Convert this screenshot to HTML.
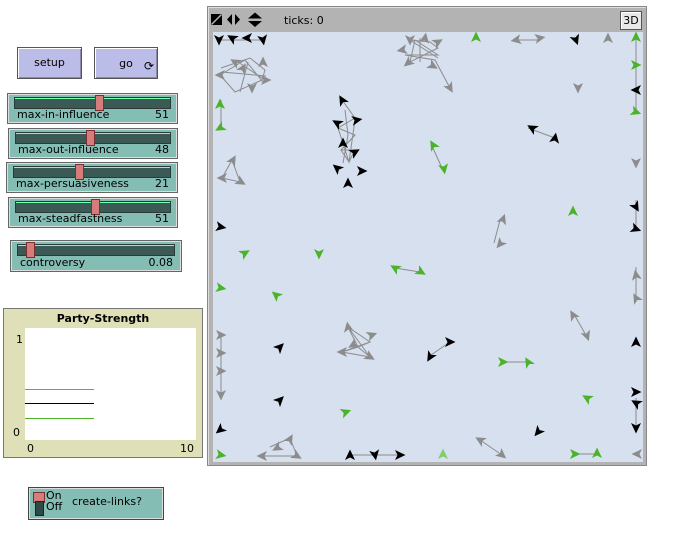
<!DOCTYPE html>
<html><head><meta charset="utf-8"><style>
body{margin:0;width:676px;height:545px;background:#fff;position:relative;overflow:hidden;font-family:"DejaVu Sans","Liberation Sans",sans-serif;font-size:11px;color:#000}
.a{position:absolute;box-sizing:border-box}
.btn{background:#bcbce8;border:1px solid #555;box-shadow:inset 1px 1px 0 #fff,inset -1px -1px 0 #8888b0;text-align:center}
.sl{background:#83bdb4;border:1px solid #666;box-shadow:0 0 0 1px #ddd inset}
.tr{position:absolute;left:6px;right:6px;top:3px;height:10px;background:#3c5a55;border:1px solid #2a3a38;box-shadow:inset 0 1px 0 #7fa}
.th{position:absolute;top:1px;width:9px;height:16px;background:#d67c7c;border:1px solid #7a3030;box-sizing:border-box}
.lb{position:absolute;left:9px;bottom:2px}
.vl{position:absolute;right:8px;bottom:2px}
</style></head><body>
<div class="a btn" style="left:17px;top:47px;width:65px;height:32px;line-height:30px">setup</div>
<div class="a btn" style="left:94px;top:47px;width:64px;height:32px;line-height:32px">go<span style="position:absolute;right:3px;top:2px;font-size:12px">⟳</span></div>

<div class="a sl" style="left:7px;top:93px;width:171px;height:31px"><div class="tr"></div><div class="th" style="left:87px"></div><span class="lb">max-in-influence</span><span class="vl">51</span></div>
<div class="a sl" style="left:8px;top:128px;width:170px;height:31px"><div class="tr"></div><div class="th" style="left:77px"></div><span class="lb">max-out-influence</span><span class="vl">48</span></div>
<div class="a sl" style="left:6px;top:162px;width:172px;height:31px"><div class="tr"></div><div class="th" style="left:68px"></div><span class="lb">max-persuasiveness</span><span class="vl">21</span></div>
<div class="a sl" style="left:8px;top:197px;width:170px;height:31px"><div class="tr"></div><div class="th" style="left:82px"></div><span class="lb">max-steadfastness</span><span class="vl">51</span></div>
<div class="a sl" style="left:10px;top:240px;width:172px;height:32px"><div class="tr"></div><div class="th" style="left:15px"></div><span class="lb">controversy</span><span class="vl">0.08</span></div>

<div class="a" style="left:3px;top:308px;width:200px;height:150px;background:#e0e0b8;border:1px solid #777">
<div style="position:absolute;left:0;right:0;top:3px;text-align:center;font-weight:bold">Party-Strength</div>
<div style="position:absolute;left:21px;top:19px;width:171px;height:112px;background:#fff">
<div style="position:absolute;left:0;top:61px;width:69px;height:1px;background:#8c8c8c"></div>
<div style="position:absolute;left:0;top:75px;width:69px;height:1px;background:#000"></div>
<div style="position:absolute;left:0;top:90px;width:69px;height:1px;background:#4ab32a"></div></div>
<span style="position:absolute;left:12px;top:24px">1</span><span style="position:absolute;left:9px;top:117px">0</span>
<span style="position:absolute;left:23px;top:133px">0</span><span style="position:absolute;right:8px;top:133px">10</span></div>

<div class="a sl" style="left:28px;top:487px;width:136px;height:33px;border-color:#444">
<div style="position:absolute;left:4px;top:4px;width:10px;height:9px;background:#d67c7c;border:1px solid #7a3030"></div>
<div style="position:absolute;left:6px;top:13px;width:7px;height:13px;background:#2e4a46;border:1px solid #222"></div>
<span style="position:absolute;left:17px;top:2px;line-height:11px">On<br>Off</span>
<span style="position:absolute;left:43px;top:7px">create-links?</span></div>

<div class="a" style="left:207px;top:6px;width:440px;height:460px;background:#b3b3b3;border:1px solid #888;box-shadow:inset 1px 1px 0 #ddd"></div>
<div class="a" style="left:284px;top:14px;font-size:11px">ticks: 0</div>
<svg class="a" style="left:210px;top:11px" width="60" height="20"><path d="M1,3h11v11H1z" fill="#000"/><path d="M11.5,3.5L1.5,13.5" stroke="#b3b3b3" stroke-width="1.5"/><path d="M17,8.5l5,-5.5v11zM25,3l5,5.5l-5,5.5z" fill="#000"/><path d="M38,7.5l7,-6l7,6zM38,10l7,6l7,-6z" fill="#000"/></svg>
<div class="a" style="left:620px;top:11px;width:22px;height:19px;background:#e8e8e8;border:1px solid #555;box-shadow:inset 1px 1px 0 #fff;text-align:center;line-height:17px">3D</div>

<svg class="a" style="left:0;top:0" width="676" height="545">
<defs><path id="t" d="M0,-5.5L5,5L0,2.5L-5,5Z"/></defs>
<rect x="213" y="32" width="430" height="430" fill="#d6e0ee"/>
<g stroke="#8c8c8c" stroke-width="1" fill="none">
<path d="M219,40H263M221,68L250,58L265,70L262,80L235,92L220,75L245,60L263,82M235,60L262,78M240,92L248,62M222,72L266,76"/>
<path d="M410,40L430,42L438,48L410,62L415,40L438,55L405,55L435,60L450,88M410,40L438,58M420,38L420,62"/>
<path d="M342,100L355,118L338,128L355,135L341,150L355,150L349,162L338,128M345,110L348,135L343,163M341,150L349,162L355,120"/>
<path d="M232,160L222,178L240,182ZM528,128L555,138M432,146L442,168M500,220L494,243M395,268L420,272M636,37V112M636,267V298M636,200V230M221,100V130"/>
<path d="M348,327L370,342L358,347L342,352L370,357ZM348,327L358,347L370,357M342,352L370,342"/>
<path d="M428,357L450,342M575,316L587,337M221,335V395M503,362L528,362M480,440L502,455M636,398V428M270,447L290,438L297,456L262,456M516,40L540,40M350,455H400M575,454H597"/>
</g>
<g fill="#000">
<use href="#t" transform="translate(219,40) rotate(180)"/><use href="#t" transform="translate(232,38) rotate(-60)"/><use href="#t" transform="translate(247,38) rotate(-90)"/><use href="#t" transform="translate(263,40) rotate(170)"/>
<use href="#t" transform="translate(576,40) rotate(160)"/><use href="#t" transform="translate(342,100) rotate(-30)"/><use href="#t" transform="translate(337,123) rotate(-60)"/><use href="#t" transform="translate(357,120) rotate(80)"/><use href="#t" transform="translate(343,143) rotate(0)"/><use href="#t" transform="translate(355,152) rotate(60)"/><use href="#t" transform="translate(337,168) rotate(-50)"/><use href="#t" transform="translate(362,171) rotate(90)"/><use href="#t" transform="translate(348,183) rotate(0)"/>
<use href="#t" transform="translate(532,128) rotate(-60)"/><use href="#t" transform="translate(555,138) rotate(10)"/><use href="#t" transform="translate(636,90) rotate(-90)"/>
<use href="#t" transform="translate(221,227) rotate(100)"/><use href="#t" transform="translate(636,207) rotate(150)"/><use href="#t" transform="translate(636,229) rotate(110)"/>
<use href="#t" transform="translate(280,347) rotate(45)"/><use href="#t" transform="translate(430,357) rotate(-150)"/><use href="#t" transform="translate(450,342) rotate(90)"/><use href="#t" transform="translate(636,342) rotate(0)"/><use href="#t" transform="translate(280,400) rotate(45)"/>
<use href="#t" transform="translate(636,392) rotate(90)"/><use href="#t" transform="translate(636,403) rotate(-60)"/><use href="#t" transform="translate(636,428) rotate(180)"/><use href="#t" transform="translate(220,430) rotate(-130)"/><use href="#t" transform="translate(538,432) rotate(-140)"/>
<use href="#t" transform="translate(350,455) rotate(0)"/><use href="#t" transform="translate(375,455) rotate(170)"/><use href="#t" transform="translate(400,455) rotate(90)"/>
</g>
<g fill="#8c8c8c">
<use href="#t" transform="translate(220,75) rotate(-90)"/><use href="#t" transform="translate(235,62) rotate(-60)"/><use href="#t" transform="translate(263,62) rotate(0)"/><use href="#t" transform="translate(266,80) rotate(90)"/><use href="#t" transform="translate(252,88) rotate(180)"/><use href="#t" transform="translate(243,68) rotate(30)"/>
<use href="#t" transform="translate(410,40) rotate(180)"/><use href="#t" transform="translate(425,38) rotate(10)"/><use href="#t" transform="translate(438,42) rotate(60)"/><use href="#t" transform="translate(402,50) rotate(-100)"/><use href="#t" transform="translate(408,63) rotate(-130)"/><use href="#t" transform="translate(433,66) rotate(120)"/><use href="#t" transform="translate(450,88) rotate(150)"/>
<use href="#t" transform="translate(516,40) rotate(-100)"/><use href="#t" transform="translate(540,38) rotate(80)"/><use href="#t" transform="translate(608,38) rotate(0)"/><use href="#t" transform="translate(578,88) rotate(180)"/><use href="#t" transform="translate(636,163) rotate(180)"/>
<use href="#t" transform="translate(233,160) rotate(30)"/><use href="#t" transform="translate(222,178) rotate(-90)"/><use href="#t" transform="translate(241,182) rotate(120)"/>
<use href="#t" transform="translate(503,219) rotate(20)"/><use href="#t" transform="translate(500,244) rotate(-140)"/><use href="#t" transform="translate(636,275) rotate(-10)"/><use href="#t" transform="translate(636,298) rotate(-30)"/>
<use href="#t" transform="translate(348,327) rotate(-10)"/><use href="#t" transform="translate(372,335) rotate(70)"/><use href="#t" transform="translate(353,345) rotate(-120)"/><use href="#t" transform="translate(342,352) rotate(-90)"/><use href="#t" transform="translate(370,357) rotate(120)"/>
<use href="#t" transform="translate(573,315) rotate(-30)"/><use href="#t" transform="translate(587,336) rotate(160)"/>
<use href="#t" transform="translate(221,335) rotate(90)"/><use href="#t" transform="translate(221,353) rotate(90)"/><use href="#t" transform="translate(221,371) rotate(90)"/><use href="#t" transform="translate(221,395) rotate(180)"/>
<use href="#t" transform="translate(480,440) rotate(-60)"/><use href="#t" transform="translate(502,455) rotate(130)"/><use href="#t" transform="translate(637,454) rotate(-90)"/>
<use href="#t" transform="translate(262,456) rotate(-90)"/><use href="#t" transform="translate(277,448) rotate(-120)"/><use href="#t" transform="translate(290,439) rotate(30)"/><use href="#t" transform="translate(297,456) rotate(120)"/>
</g>
<g fill="#4ab32a">
<use href="#t" transform="translate(476,37) rotate(0)"/><use href="#t" transform="translate(636,37) rotate(0)"/><use href="#t" transform="translate(636,65) rotate(90)"/><use href="#t" transform="translate(636,112) rotate(110)"/>
<use href="#t" transform="translate(220,104) rotate(0)"/><use href="#t" transform="translate(220,128) rotate(-120)"/><use href="#t" transform="translate(433,145) rotate(-30)"/><use href="#t" transform="translate(444,169) rotate(170)"/>
<use href="#t" transform="translate(573,211) rotate(0)"/><use href="#t" transform="translate(245,253) rotate(60)"/><use href="#t" transform="translate(319,254) rotate(180)"/><use href="#t" transform="translate(395,268) rotate(-60)"/><use href="#t" transform="translate(421,272) rotate(120)"/>
<use href="#t" transform="translate(276,295) rotate(-50)"/><use href="#t" transform="translate(221,288) rotate(100)"/><use href="#t" transform="translate(503,362) rotate(90)"/><use href="#t" transform="translate(528,362) rotate(-30)"/>
<use href="#t" transform="translate(346,412) rotate(70)"/><use href="#t" transform="translate(587,398) rotate(-60)"/><use href="#t" transform="translate(221,455) rotate(100)"/><use href="#t" transform="translate(575,454) rotate(90)"/><use href="#t" transform="translate(597,453) rotate(0)"/>
</g>
<use href="#t" transform="translate(443,454)" fill="#7fcf6a"/>
</svg>
</body></html>
